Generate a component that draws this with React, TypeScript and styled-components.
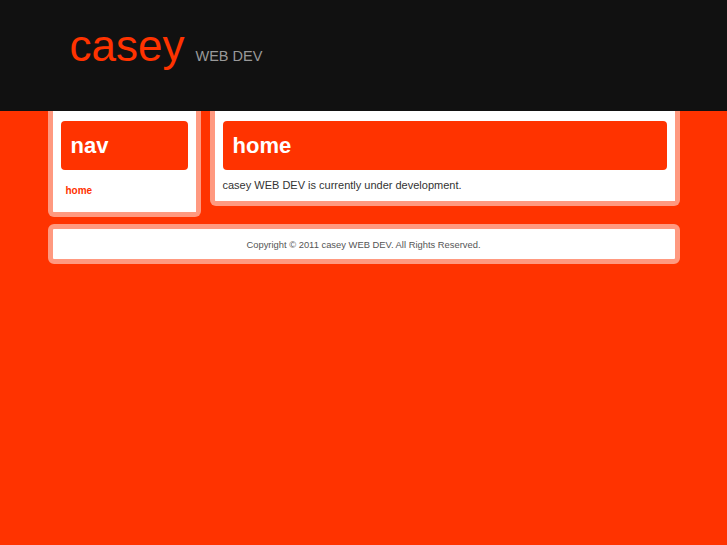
import React from 'react';
import styled, { createGlobalStyle } from 'styled-components';

const orange = '#ff3300';
const frame = '#ff9980';

const GlobalStyle = createGlobalStyle`
	html, body {
		margin: 0;
		padding: 0;
	}
	body {
		background: ${orange};
		font-family: "Liberation Sans", Arial, Helvetica, sans-serif;
	}
`;

function App() {
	return (
		<>
			<GlobalStyle />
			<Header>
				<Brand>
					<Logo>casey</Logo>
					<Tagline>WEB DEV</Tagline>
				</Brand>
			</Header>
			<Page>
				<Columns>
					<Sidebar>
						<Title>nav</Title>
						<NavList>
							<li><NavLink href="#">home</NavLink></li>
						</NavList>
					</Sidebar>
					<Main>
						<Title>home</Title>
						<Text>casey WEB DEV is currently under development.</Text>
					</Main>
				</Columns>
				<Footer>Copyright © 2011 casey WEB DEV. All Rights Reserved.</Footer>
			</Page>
		</>
	);
}

export default App;

const Header = styled.header`
	background: #111111;
	height: 111px;
	box-sizing: border-box;
	padding-top: 24px;
`;

const Brand = styled.div`
	width: 632px;
	margin: 0 auto;
	padding-left: 22px;
	box-sizing: border-box;
	display: flex;
	align-items: baseline;
	gap: 11px;
`;

const Logo = styled.h1`
	margin: 0;
	font-size: 44px;
	line-height: 1;
	font-weight: 400;
	color: ${orange};
`;

const Tagline = styled.span`
	font-size: 14.5px;
	line-height: 1;
	color: #999999;
`;

const Page = styled.div`
	width: 632px;
	margin: 0 auto;
	display: flex;
	flex-direction: column;
	gap: 7px;
`;

const Columns = styled.div`
	display: flex;
	align-items: flex-start;
	gap: 9px;
`;

const Panel = styled.div`
	background: #ffffff;
	border: 5px solid ${frame};
	border-top: 0;
	border-radius: 0 0 6px 6px;
	padding: 10px 8px 8px;
	box-sizing: border-box;
`;

const Sidebar = styled(Panel)`
	width: 153px;
	padding-bottom: 15px;
`;

const Main = styled(Panel)`
	flex: 1;
`;

const Title = styled.h2`
	margin: 0;
	height: 49px;
	padding: 0 10px;
	display: flex;
	align-items: center;
	background: ${orange};
	border-radius: 4px;
	color: #ffffff;
	font-size: 22px;
	font-weight: 700;
`;

const NavList = styled.ul`
	list-style: none;
	margin: 13px 0 0;
	padding: 0 0 0 5px;
	line-height: 12px;
`;

const NavLink = styled.a`
	color: ${orange};
	font-size: 10px;
	font-weight: 700;
	text-decoration: none;
`;

const Text = styled.p`
	margin: 8px 0 0;
	font-size: 11px;
	line-height: 15px;
	color: #333333;
`;

const Footer = styled.footer`
	background: #ffffff;
	border: 5px solid ${frame};
	border-radius: 6px;
	height: 40px;
	box-sizing: border-box;
	display: flex;
	align-items: center;
	justify-content: center;
	font-size: 9.4px;
	color: #555555;
`;
